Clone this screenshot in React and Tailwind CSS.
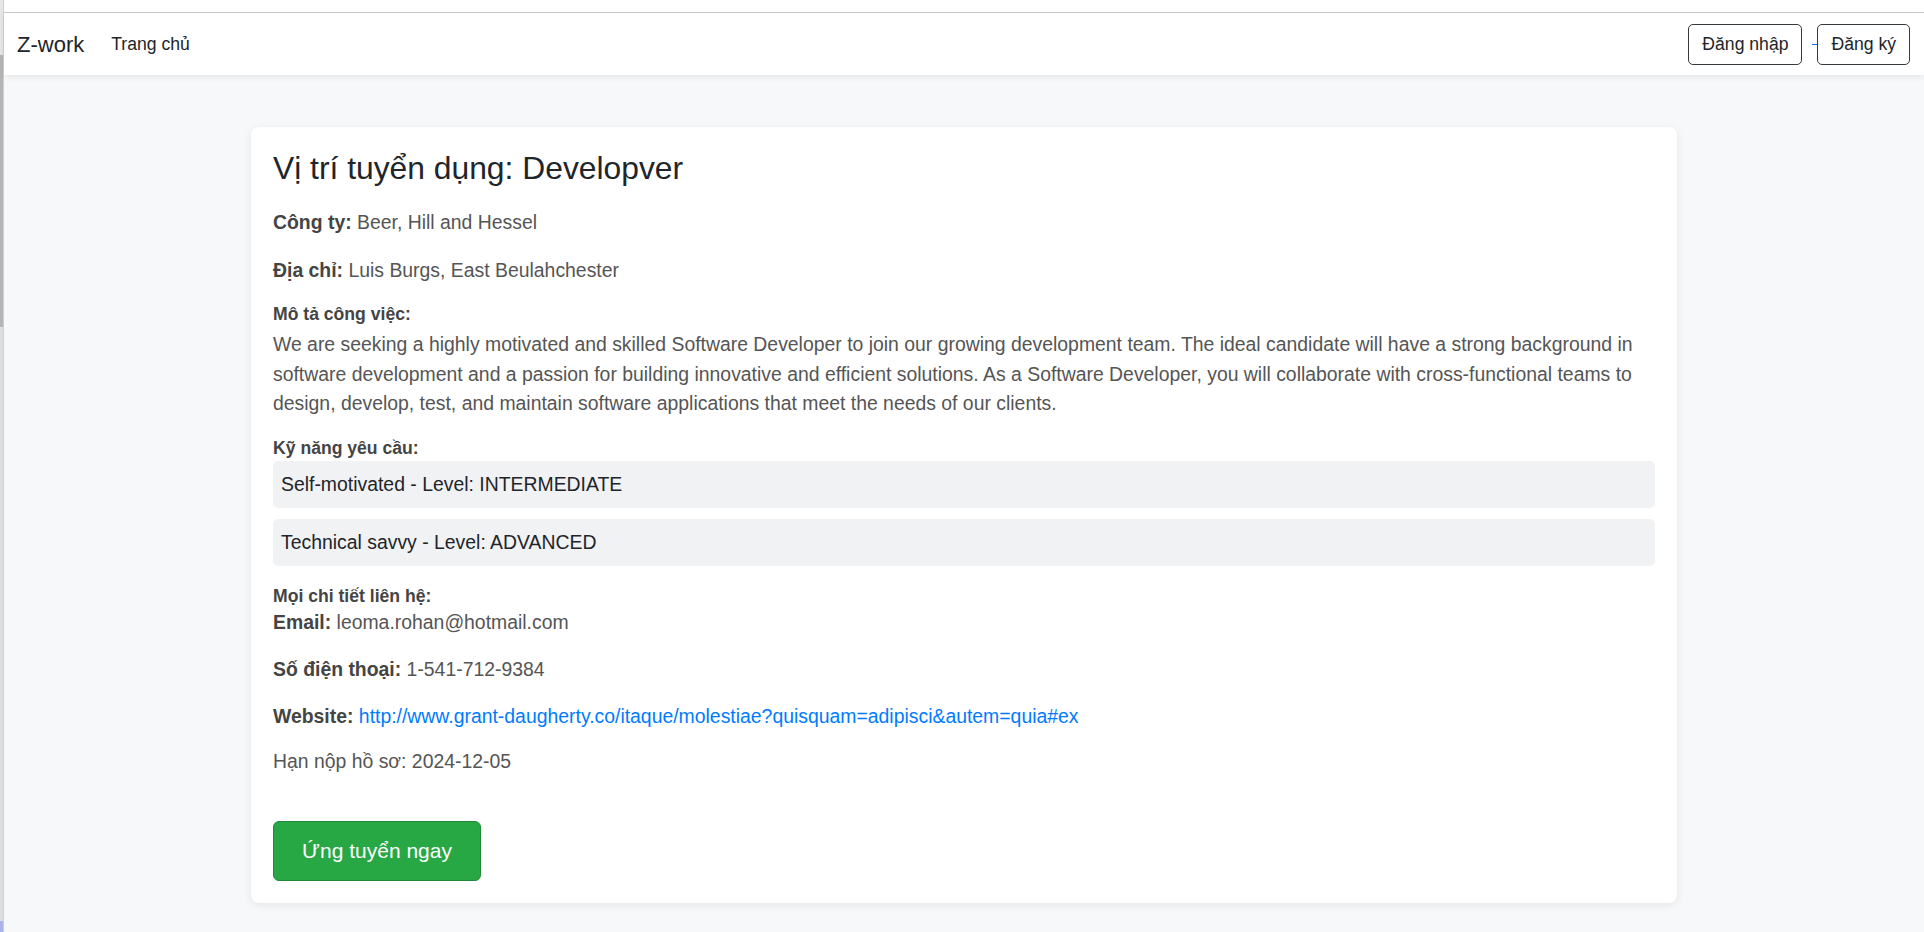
import React from "react";

const job = {
  title: "Developver",
  company: "Beer, Hill and Hessel",
  address: "Luis Burgs, East Beulahchester",
  description:
    "We are seeking a highly motivated and skilled Software Developer to join our growing development team. The ideal candidate will have a strong background in software development and a passion for building innovative and efficient solutions. As a Software Developer, you will collaborate with cross-functional teams to design, develop, test, and maintain software applications that meet the needs of our clients.",
  skills: [
    { name: "Self-motivated", level: "INTERMEDIATE" },
    { name: "Technical savvy", level: "ADVANCED" },
  ],
  email: "leoma.rohan@hotmail.com",
  phone: "1-541-712-9384",
  website: "http://www.grant-daugherty.co/itaque/molestiae?quisquam=adipisci&autem=quia#ex",
  deadline: "2024-12-05",
};

export default function App() {
  return (
    <div className="flex h-[932px] w-full overflow-hidden font-['Liberation_Sans',Arial,sans-serif]">
      {/* window edge */}
      <div className="flex w-[4px] shrink-0 flex-col border-r border-[#cfcfcf]">
        <div className="h-[55px] bg-[#e6e6e6]"></div>
        <div className="h-[272px] bg-[#b5b5b5]"></div>
        <div className="flex-1 bg-[#dedede]"></div>
        <div className="h-[11px] bg-[#a9b4e8]"></div>
      </div>

      <div className="flex min-w-0 flex-1 flex-col bg-[#f7f8fa]">
        <div className="h-[13px] shrink-0 border-b border-[#cccccc] bg-white"></div>

        <nav className="relative z-10 flex h-[62px] shrink-0 items-center justify-between bg-white pl-[13px] pr-[14px] shadow-[0_2px_6px_rgba(0,0,0,0.08)]">
          <div className="flex items-center">
            <a className="text-[22px] text-[#212529]">Z-work</a>
            <a className="ml-[27px] text-[17.6px] text-[#212529]">Trang chủ</a>
          </div>
          <div className="flex items-center">
            <button className="flex h-[41px] items-center rounded-[5px] border border-[#343a40] px-[13px] text-[17.6px] text-[#212529]">
              Đăng nhập
            </button>
            <span className="ml-[10px] mt-[1px] h-px w-[5px] bg-[#0d6efd]"></span>
            <button className="flex h-[41px] items-center rounded-[5px] border border-[#343a40] px-[13px] text-[17.6px] text-[#212529]">
              Đăng ký
            </button>
          </div>
        </nav>

        <main className="flex-1 pt-[52px]">
          <div className="mx-auto w-[1426px] rounded-[8px] bg-white p-[22px] shadow-[0_2px_10px_rgba(0,0,0,0.08)]">
            <h2 className="mb-[21px] text-[31.8px] leading-[1.2] text-[#212529]">
              Vị trí tuyển dụng: {job.title}
            </h2>

            <p className="mb-[19px] text-[19.4px] leading-[1.5] text-[#555]">
              <strong className="text-[#444]">Công ty:</strong> {job.company}
            </p>
            <p className="mb-[19px] text-[19.4px] leading-[1.5] text-[#555]">
              <strong className="text-[#444]">Địa chỉ:</strong> {job.address}
            </p>

            <h6 className="mb-[5px] text-[17.6px] font-bold leading-[1.2] text-[#444]">Mô tả công việc:</h6>
            <p className="mb-[20px] text-[19.4px] leading-[1.5] text-[#555]">{job.description}</p>

            <h6 className="mb-[2px] text-[17.6px] font-bold leading-[1.2] text-[#444]">Kỹ năng yêu cầu:</h6>
            <ul className="mb-[20px]">
              {job.skills.map((s) => (
                <li
                  key={s.name}
                  className="mb-[11px] rounded-[5px] bg-[#f1f2f4] px-[8px] py-[9px] text-[19.4px] leading-[1.5] text-[#212529] last:mb-0"
                >
                  {s.name} - Level: {s.level}
                </li>
              ))}
            </ul>

            <h6 className="mb-px text-[17.6px] font-bold leading-[1.2] text-[#444]">Mọi chi tiết liên hệ:</h6>
            <p className="mb-[18px] text-[19.4px] leading-[1.5] text-[#555]">
              <strong className="text-[#444]">Email:</strong> {job.email}
            </p>
            <p className="mb-[18px] text-[19.4px] leading-[1.5] text-[#555]">
              <strong className="text-[#444]">Số điện thoại:</strong> {job.phone}
            </p>
            <p className="mb-[15px] text-[19.4px] leading-[1.5] text-[#555]">
              <strong className="text-[#444]">Website:</strong>{" "}
              <a className="text-[#007bff]">{job.website}</a>
            </p>
            <p className="text-[19.4px] leading-[1.5] text-[#555]">Hạn nộp hồ sơ: {job.deadline}</p>

            <button className="mt-[45px] flex h-[60px] w-[208px] items-center justify-center rounded-[6px] border border-[#218838] bg-[#28a745] text-[21px] text-white">
              Ứng tuyển ngay
            </button>
          </div>
        </main>
      </div>
    </div>
  );
}
